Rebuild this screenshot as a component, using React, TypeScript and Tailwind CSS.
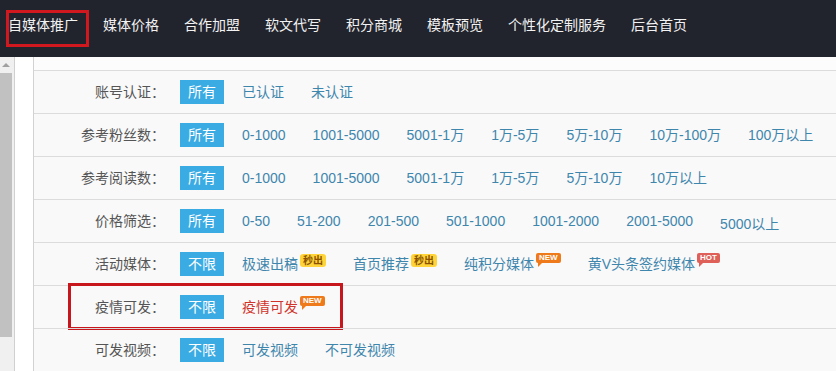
import type { ReactNode } from 'react'

const font = 'font-["Liberation_Sans","Noto_Sans_CJK_SC",sans-serif]'

const navItems = ['自媒体推广', '媒体价格', '合作加盟', '软文代写', '积分商城', '模板预览', '个性化定制服务', '后台首页']

type Badge = 'sec' | 'new' | 'hot'

type Opt = { text: string; badge?: Badge; red?: boolean; low?: boolean }

type Row = { label: string; all: string; options: Opt[]; boxed?: boolean }

const rows: Row[] = [
  { label: '账号认证：', all: '所有', options: [{ text: '已认证' }, { text: '未认证' }] },
  {
    label: '参考粉丝数：',
    all: '所有',
    options: ['0-1000', '1001-5000', '5001-1万', '1万-5万', '5万-10万', '10万-100万', '100万以上'].map((t) => ({ text: t })),
  },
  {
    label: '参考阅读数：',
    all: '所有',
    options: ['0-1000', '1001-5000', '5001-1万', '1万-5万', '5万-10万', '10万以上'].map((t) => ({ text: t })),
  },
  {
    label: '价格筛选：',
    all: '所有',
    options: [
      ...['0-50', '51-200', '201-500', '501-1000', '1001-2000', '2001-5000'].map((t) => ({ text: t })),
      { text: '5000以上', low: true },
    ],
  },
  {
    label: '活动媒体：',
    all: '不限',
    options: [
      { text: '极速出稿', badge: 'sec' },
      { text: '首页推荐', badge: 'sec' },
      { text: '纯积分媒体', badge: 'new' },
      { text: '黄V头条签约媒体', badge: 'hot' },
    ],
  },
  { label: '疫情可发：', all: '不限', options: [{ text: '疫情可发', badge: 'new', red: true }], boxed: true },
  { label: '可发视频：', all: '不限', options: [{ text: '可发视频' }, { text: '不可发视频' }] },
]

function Bubble({ children, color }: { children: ReactNode; color: string }) {
  return (
    <span className="relative -top-[6px] ml-[2px] inline-block">
      <span
        className={`block h-[10px] rounded-[2px] px-[3px] text-[8px] font-bold leading-[10px] text-white ${color === 'hot' ? 'bg-[#de6058]' : 'bg-[#ef7a1c]'}`}
      >
        {children}
      </span>
      <span
        className={`absolute left-[2px] top-[10px] h-0 w-0 border-r-[4px] border-t-[4px] border-r-transparent ${color === 'hot' ? 'border-t-[#de6058]' : 'border-t-[#ef7a1c]'}`}
      />
    </span>
  )
}

function OptionItem({ o }: { o: Opt }) {
  return (
    <span className={`inline-flex items-center whitespace-nowrap ${o.red ? 'text-[#d0342a]' : 'text-[#3f86ad]'} ${o.low ? 'translate-y-[3px]' : ''}`}>
      {o.text}
      {o.badge === 'sec' && (
        <span className="relative -top-[4px] ml-[2px] inline-block h-[13px] rounded-[3px] bg-[#ffd43a] px-[3px] text-[10px] font-bold leading-[13px] text-[#8a5200]">
          秒出
        </span>
      )}
      {o.badge === 'new' && <Bubble color="new">NEW</Bubble>}
      {o.badge === 'hot' && <Bubble color="hot">HOT</Bubble>}
    </span>
  )
}

function FilterRow({ row }: { row: Row }) {
  return (
    <div className="relative flex h-[43px] items-center border-t border-[#dcdcdc] text-[14px]">
      <div className="w-[131px] shrink-0 text-right text-[#555]">{row.label}</div>
      <div className="ml-[15px] flex h-[24px] w-[44px] shrink-0 items-center justify-center bg-[#3babe3] text-white">
        {row.all}
      </div>
      <div className="ml-[18px] flex items-center gap-[27px]">
        {row.options.map((o) => (
          <OptionItem key={o.text} o={o} />
        ))}
      </div>
      {row.boxed && (
        <div className="absolute -top-[3px] left-[34px] h-[47px] w-[275px] border-[3px] border-[#c8161d]" />
      )}
    </div>
  )
}

export default function App() {
  return (
    <div className={`h-[371px] w-[836px] overflow-hidden bg-white ${font}`}>
      <nav className="flex h-[57px] items-start gap-[25px] bg-[#22242d] pl-[8px] pt-[15px] text-[14px] leading-[20px] text-[#f2f2f2]">
        {navItems.map((item, i) => (
          <div key={item} className="relative whitespace-nowrap">
            {item}
            {i === 0 && (
              <div className="absolute -left-[2px] -top-[5px] h-[37px] w-[83px] border-[3px] border-[#d0181e]" />
            )}
          </div>
        ))}
      </nav>

      <div className="flex h-[314px]">
        <div className="flex w-[15px] shrink-0 flex-col border-r border-[#d0d0d0] bg-[#f0f0f0]">
          <div className="flex h-[16px] items-center justify-center pr-[2px]">
            <span className="h-0 w-0 border-x-[4px] border-b-[4px] border-x-transparent border-b-[#a0a0a0]" />
          </div>
          <div className="h-[264px] w-[12px] bg-[#c1c1c1]" />
        </div>
        <div className="w-[19px] shrink-0 border-r border-[#d2d2d2] bg-white" />
        <div className="flex-1 bg-[#f9f9f9]">
          <div className="h-[13px] bg-[#fcfcfc]" />
          {rows.map((row) => (
            <FilterRow key={row.label} row={row} />
          ))}
        </div>
      </div>
    </div>
  )
}
